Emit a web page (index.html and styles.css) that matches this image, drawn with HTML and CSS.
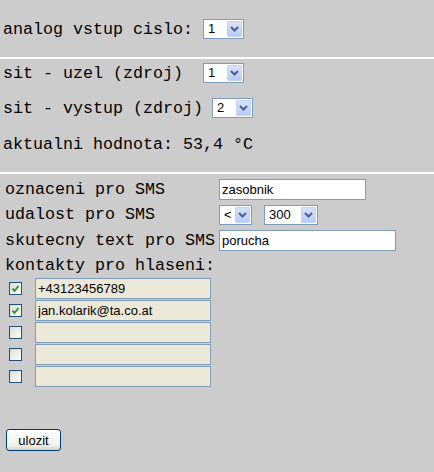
FILE: index.html
```html
<!DOCTYPE html>
<html>
<head>
<meta charset="utf-8">
<link rel="stylesheet" href="styles.css">
</head>
<body>
<section class="sec-a">
  <div class="row"><span class="lbl">analog vstup cislo: </span><span class="sel w41"><span class="sel-val">1</span><span class="sel-btn"><svg width="9" height="6" viewBox="0 0 9 6"><polyline points="1,1 4.5,4.5 8,1" fill="none" stroke="#4d6185" stroke-width="2"/></svg></span></span></div>
</section>
<div class="rule"></div>
<section class="sec-b">
  <div class="row"><span class="lbl">sit - uzel (zdroj)  </span><span class="sel w41"><span class="sel-val">1</span><span class="sel-btn"><svg width="9" height="6" viewBox="0 0 9 6"><polyline points="1,1 4.5,4.5 8,1" fill="none" stroke="#4d6185" stroke-width="2"/></svg></span></span></div>
  <div class="row r2"><span class="lbl">sit - vystup (zdroj)</span><span class="sel w41 ml9"><span class="sel-val">2</span><span class="sel-btn"><svg width="9" height="6" viewBox="0 0 9 6"><polyline points="1,1 4.5,4.5 8,1" fill="none" stroke="#4d6185" stroke-width="2"/></svg></span></span></div>
  <div class="row r3"><span class="lbl">aktualni hodnota: 53,4 °C</span></div>
</section>
<div class="rule"></div>
<section class="form">
  <div class="frow"><span class="flbl">oznaceni pro SMS</span><input class="inp w147" type="text" value="zasobnik"></div>
  <div class="frow f2"><span class="flbl">udalost pro SMS</span><span class="selpair"><span class="sel w33"><span class="sel-val">&lt;</span><span class="sel-btn"><svg width="9" height="6" viewBox="0 0 9 6"><polyline points="1,1 4.5,4.5 8,1" fill="none" stroke="#4d6185" stroke-width="2"/></svg></span></span><span class="sel w54"><span class="sel-val">300</span><span class="sel-btn"><svg width="9" height="6" viewBox="0 0 9 6"><polyline points="1,1 4.5,4.5 8,1" fill="none" stroke="#4d6185" stroke-width="2"/></svg></span></span></span></div>
  <div class="frow f3"><span class="flbl">skutecny text pro SMS</span><input class="inp w177" type="text" value="porucha"></div>
  <div class="frow f4"><span class="flbl">kontakty pro hlaseni:</span></div>
  <div class="contacts">
    <div class="contact"><span class="chk on"><svg width="11" height="11" viewBox="0 0 11 11"><polyline points="2.5,5.5 4.5,8 8.5,3" fill="none" stroke="#21a121" stroke-width="2"/></svg></span><input class="cinp" type="text" value="+43123456789"></div>
    <div class="contact"><span class="chk on"><svg width="11" height="11" viewBox="0 0 11 11"><polyline points="2.5,5.5 4.5,8 8.5,3" fill="none" stroke="#21a121" stroke-width="2"/></svg></span><input class="cinp" type="text" value="jan.kolarik@ta.co.at"></div>
    <div class="contact"><span class="chk"></span><input class="cinp" type="text" value=""></div>
    <div class="contact"><span class="chk"></span><input class="cinp" type="text" value=""></div>
    <div class="contact"><span class="chk"></span><input class="cinp" type="text" value=""></div>
  </div>
  <button class="btn" type="button">ulozit</button>
</section>
</body>
</html>
```
FILE: styles.css
```css
html, body {
  margin: 0;
  padding: 0;
}
body {
  background: #cccccc;
  font-family: "Liberation Mono", "Courier New", monospace;
  font-size: 16.67px;
  color: #000;
}
.sec-a {
  padding: 19px 0 0 3px;
}
.row {
  display: flex;
  align-items: center;
  height: 20px;
  white-space: pre;
}
.rule {
  height: 2px;
  background: #ffffff;
  margin-top: 18px;
}
.sec-b {
  padding: 4px 0 0 3px;
  display: flex;
  flex-direction: column;
}
.r2 { margin-top: 15px; }
.r3 { margin-top: 16px; }
.ml9 { margin-left: 9px; }

.sel {
  display: inline-flex;
  align-items: center;
  justify-content: space-between;
  box-sizing: border-box;
  height: 20px;
  border: 1px solid #7f9db9;
  background: #fff;
  font-family: "Liberation Sans", Arial, sans-serif;
  font-size: 13px;
  padding-left: 4px;
  padding-right: 1px;
}
.w41 { width: 41px; }
.w33 { width: 33px; }
.w54 { width: 54px; }
.sel-val {
  line-height: 16px;
}
.sel-btn {
  display: flex;
  align-items: center;
  justify-content: center;
  box-sizing: border-box;
  width: 15px;
  height: 16px;
  background: linear-gradient(#d6e1fd, #b8cbf8);
  border: 1px solid #c3d3f6;
  border-radius: 1px;
}

.form {
  padding: 5px 0 0 5px;
  display: flex;
  flex-direction: column;
}
.frow {
  display: grid;
  grid-template-columns: 214px auto;
  align-items: center;
  height: 21px;
  white-space: pre;
}
.f2 { margin-top: 4px; }
.f3 { margin-top: 5px; }
.f4 { margin-top: 4px; }
.selpair {
  display: flex;
  gap: 12px;
}
.inp {
  box-sizing: border-box;
  height: 21px;
  margin: 0;
  border: 1px solid #7f9db9;
  background: #fff;
  padding: 0 2px;
  font-family: "Liberation Sans", Arial, sans-serif;
  font-size: 13px;
  color: #000;
  outline: none;
}
.w147 { width: 147px; }
.w177 { width: 177px; }

.contacts {
  margin-top: 2px;
  margin-left: 4px;
  display: flex;
  flex-direction: column;
  gap: 1px;
}
.contact {
  display: flex;
  align-items: center;
  height: 21px;
}
.chk {
  box-sizing: border-box;
  width: 13px;
  height: 13px;
  border: 1px solid #1c5180;
  background: linear-gradient(135deg, #dcdcd7, #ffffff);
  display: flex;
  align-items: center;
  justify-content: center;
  margin-right: 13px;
}
.cinp {
  box-sizing: border-box;
  width: 176px;
  height: 21px;
  margin: 0;
  border: 1px solid #7f9db9;
  background: #ece9d8;
  padding: 0 2px;
  font-family: "Liberation Sans", Arial, sans-serif;
  font-size: 13px;
  color: #000;
  outline: none;
}
.btn {
  align-self: flex-start;
  margin: 42px 0 0 1px;
  box-sizing: border-box;
  width: 55px;
  height: 22px;
  padding: 0;
  border: 1px solid #003c74;
  border-radius: 3px;
  background: linear-gradient(#ffffff, #f2f2ed 75%, #d8d2c6);
  font-family: "Liberation Sans", Arial, sans-serif;
  font-size: 13px;
  color: #000;
}
```
